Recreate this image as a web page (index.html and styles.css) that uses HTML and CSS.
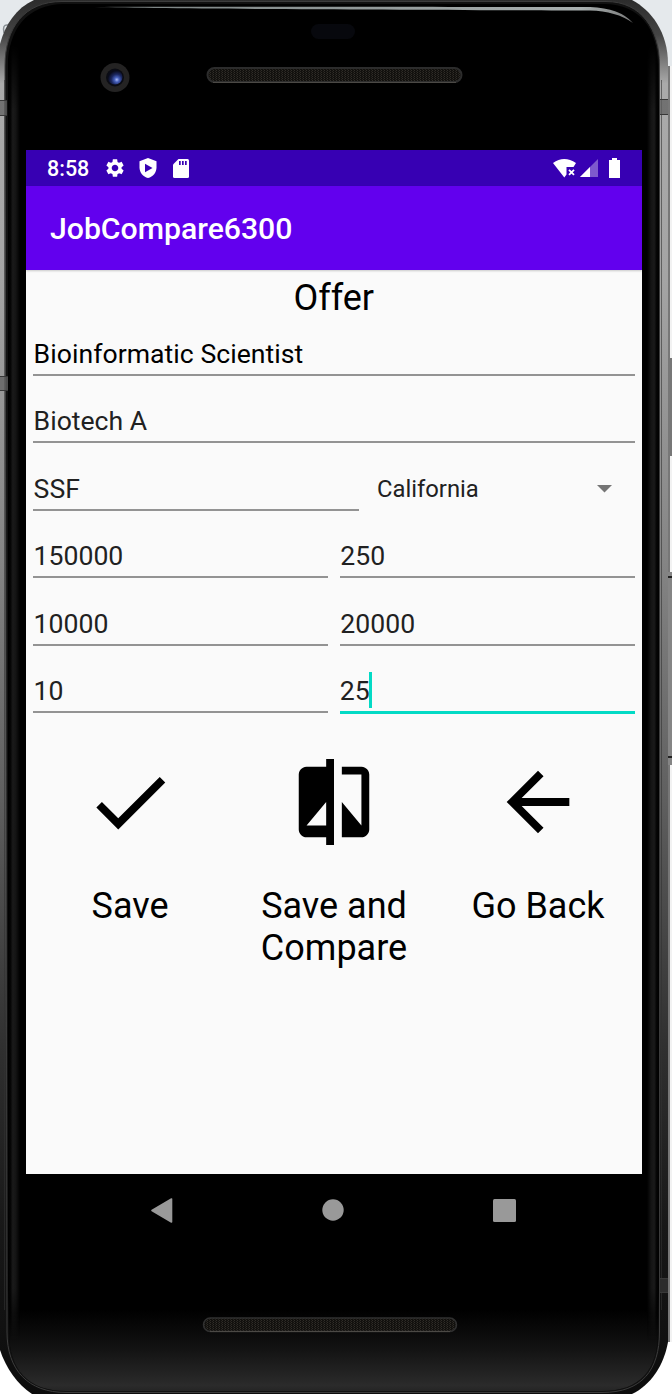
FILE: index.html
```html
<!DOCTYPE html>
<html lang="en">
<head>
<meta charset="utf-8">
<title>JobCompare6300</title>
<link rel="stylesheet" href="styles.css">
</head>
<body>
<div class="device">
  <svg class="shell" width="672" height="1394" viewBox="0 0 672 1394" aria-hidden="true">
    <defs>
      <linearGradient id="metal" x1="0" y1="0" x2="0" y2="1394" gradientUnits="userSpaceOnUse">
        <stop offset="0" stop-color="#2c2c2c"/><stop offset=".025" stop-color="#444"/>
        <stop offset=".06" stop-color="#aaa"/><stop offset=".2" stop-color="#a4a4a4"/>
        <stop offset=".4" stop-color="#858585"/><stop offset=".57" stop-color="#606060"/>
        <stop offset=".75" stop-color="#303030"/><stop offset=".88" stop-color="#181818"/>
        <stop offset="1" stop-color="#0c0c0c"/>
      </linearGradient>
      <linearGradient id="chin" x1="0" y1="1310" x2="0" y2="1394" gradientUnits="userSpaceOnUse">
        <stop offset="0" stop-color="#000"/><stop offset=".45" stop-color="#121212"/>
        <stop offset=".9" stop-color="#2b2b2b"/><stop offset="1" stop-color="#202020"/>
      </linearGradient>
      <linearGradient id="side" x1="8" x2="20" y1="0" y2="0" gradientUnits="userSpaceOnUse">
        <stop offset="0" stop-color="#000"/><stop offset=".2" stop-color="#050505"/>
        <stop offset=".4" stop-color="#1a1a1a"/><stop offset=".65" stop-color="#141414"/><stop offset="1" stop-color="#000"/>
      </linearGradient>
      <linearGradient id="fade" x1="0" x2="0" y1="45" y2="1340" gradientUnits="userSpaceOnUse">
        <stop offset="0" stop-color="#000"/><stop offset=".05" stop-color="#fff"/><stop offset=".96" stop-color="#fff"/><stop offset="1" stop-color="#000"/>
      </linearGradient>
      <mask id="sidemask" maskUnits="userSpaceOnUse" x="0" y="0" width="672" height="1394"><rect width="672" height="1394" fill="url(#fade)"/></mask>
      <linearGradient id="shine" x1="88" x2="636" y1="0" y2="0" gradientUnits="userSpaceOnUse">
        <stop offset="0" stop-color="#222"/><stop offset=".1" stop-color="#7d8585"/><stop offset=".9" stop-color="#a8afaf"/><stop offset="1" stop-color="#777"/>
      </linearGradient>
      <radialGradient id="lens" cx=".62" cy=".68" r=".6">
        <stop offset="0" stop-color="#b0bff8"/><stop offset=".25" stop-color="#4862bd"/><stop offset=".6" stop-color="#1b2760"/><stop offset="1" stop-color="#090b18"/>
      </radialGradient>
      <pattern id="mesh" width="3" height="2" patternUnits="userSpaceOnUse">
        <rect width="3" height="2" fill="#12110e"/><rect width="1" height="1" fill="#302d28"/><rect x="2" y="1" width="1" height="1" fill="#26231f"/>
      </pattern>
    </defs>
    <rect width="672" height="66" fill="#e5e9ec"/>
    <path d="M8 25q-6-1-4 8" fill="none" stroke="#8a9095" stroke-width="1.5"/>
    <rect x="667" y="66" width="3" height="1276" fill="#777"/>
    <rect x="670" y="66" width="2" height="1276" fill="#f2f2f2"/>
    <path d="M670 358h2v98h-2z" fill="#777"/><path d="M668 572h4v193h-4z" fill="#858585"/>
    <path d="M668 576h4v2h-4zm0 180h4v2h-4z" fill="#222"/>
    <path d="M0 44C5 25 16 8 34 0H632C651 10 668 32 668 64V1342C664 1365 651 1385 632 1394H32C17 1384 6 1368 0 1350Z" fill="url(#metal)"/>
    <path d="M5 66C5 28 24 1.500 62 1.500H606C642 1.500 659.500 30 659.500 65V1332C659.500 1370 642 1392.500 602 1392.500H66C28 1392.500 7 1370 7 1332Z" fill="#111" stroke="#3c3c3c"/>
    <path d="M8 66C8 30 27 4 64 4H604C641 4 658 30 658 66V1332C658 1370 640 1391 602 1391H66C28 1391 9 1370 9 1332Z" fill="#000"/>
    <path d="M9 1310H658V1332C658 1370 640 1391 602 1391H66C28 1391 9 1370 9 1332Z" fill="url(#chin)"/>
    <g mask="url(#sidemask)">
      <path d="M8 45h12v1295H8z" fill="url(#side)"/>
      <path d="M8 45h12v1295H8z" fill="url(#side)" transform="matrix(-1 0 0 1 667 0)"/>
    </g>
    <path d="M4.500 80V1310M661.500 80V1310" stroke="#333" stroke-width="1" opacity=".6"/>
    <path d="M0 101h7v14H0zM0 376h8v15H0zM660 99h8v16h-8z" fill="#606060" opacity=".75"/>
    <path d="M660 1278h8v15h-8z" fill="#2c2c2c"/>
    <path d="M0 100.500h7M0 115.500h7M0 376.500h8M0 390.500h8M660 99.500h8M660 114.500h8M660 1278.500h8M660 1292.500h8" stroke="#383838"/>
    <path d="M88 7C160 6.500 450 7 590 7Q620 8 633 23Q616 11 590 10.500C450 10 160 9 88 7Z" fill="url(#shine)"/>
    <rect x="311" y="24" width="44" height="15" rx="7.500" fill="#07080d"/>
    <circle cx="115" cy="77.500" r="14.500" fill="#242323"/><circle cx="115" cy="77.500" r="9" fill="#0b0c13"/>
    <circle cx="115" cy="77" r="7.500" fill="url(#lens)"/>
    <rect x="207.500" y="68" width="254" height="14" rx="7" fill="url(#mesh)" stroke="#2c2c2c" stroke-width="2"/>
    <rect x="203.500" y="1318" width="253" height="13.500" rx="6.700" fill="url(#mesh)" stroke="#303030" stroke-width="1.500"/>
    <path d="M213 82.500H456M210 1331.500H450" stroke="#4b4945"/>
  </svg>

  <main class="screen">
    <header class="status">
      <span class="clock">8:58</span>
      <svg class="st-gear" width="22" height="22" viewBox="0 0 24 24"><path fill="#fff" d="M19.140 12.940c.04-.3.06-.61.06-.94s-.02-.64-.07-.94l2.030-1.580c.18-.14.23-.41.12-.61l-1.920-3.320c-.12-.22-.37-.29-.59-.22l-2.390.96c-.5-.38-1.030-.7-1.620-.94l-.36-2.540c-.04-.24-.24-.41-.48-.41h-3.840c-.24 0-.43.17-.47.41l-.36 2.540c-.59.24-1.130.57-1.620.94l-2.390-.96c-.22-.08-.47 0-.59.22L2.740 8.870c-.12.21-.08.47.12.61l2.030 1.580c-.05.3-.09.63-.09.94s.02.64.07.94l-2.030 1.580c-.18.14-.23.41-.12.610l1.920 3.320c.12.220.370.290.590.220l2.390-.96c.5.380 1.030.700 1.620.940l.360 2.540c.05.240.240.410.480.410h3.840c.240 0 .440-.17.470-.410l.360-2.540c.590-.240 1.130-.560 1.620-.940l2.390.960c.220.080.470 0 .590-.220l1.920-3.320c.120-.220.070-.470-.120-.610l-2.010-1.580zM12 15.600c-1.980 0-3.600-1.620-3.600-3.600s1.620-3.600 3.600-3.600 3.600 1.620 3.600 3.600-1.620 3.600-3.600 3.600z"/></svg>
      <svg class="st-shield" width="18" height="20" viewBox="0 0 18 20"><path fill="#fff" d="M9 0L17.500 3.200V9.500C17.500 14.500 14 18.800 9 20C4 18.800.5 14.500.5 9.500V3.200Z"/><path fill="#3700b3" d="M6 5.800L13.500 10L6 14.200Z"/></svg>
      <svg class="st-card" width="16" height="19" viewBox="0 0 16 19"><path fill="#fff" d="M5.500 0H14.500Q16 0 16 1.500V17.500Q16 19 14.500 19H1.500Q0 19 0 17.500V5.500Z"/><path fill="#3700b3" d="M6 2h1.700v4H6zm3 0h1.700v4H9zm3 0h1.700v4H12z"/></svg>
      <svg class="st-wifi" width="24" height="19" viewBox="0 0 24 19"><path fill="#fff" d="M0 4Q11-4 23 4L20.500 8H13.500V15.500L11.300 18.500Z"/><path stroke="#fff" stroke-width="1.800" d="M16 10.800l5 5m0-5l-5 5"/></svg>
      <svg class="st-cell" width="18" height="18" viewBox="0 0 18 18"><path fill="#7e59cd" d="M18 0V18H0Z"/><path fill="#fff" d="M10 8V18H0Z"/></svg>
      <svg class="st-batt" width="11" height="20" viewBox="0 0 11 20"><path fill="#fff" d="M3 0h5v2h3v18H0V2h3z"/></svg>
    </header>
    <div class="appbar">JobCompare6300</div>
    <section class="form">
      <h1 class="heading">Offer</h1>
      <div class="row"><div class="field strong">Bioinformatic Scientist</div></div>
      <div class="row"><div class="field">Biotech A</div></div>
      <div class="row"><div class="field city">SSF</div>
        <div class="spinner"><span>California</span><svg width="15" height="8" viewBox="0 0 15 8"><path fill="#757575" d="M0 0h15L7.500 7.500z"/></svg></div></div>
      <div class="row"><div class="field">150000</div><div class="field">250</div></div>
      <div class="row"><div class="field">10000</div><div class="field">20000</div></div>
      <div class="row"><div class="field">10</div><div class="field focus">25<i class="caret"></i></div></div>
    </section>
    <section class="actions">
      <div class="action">
        <svg width="94" height="94" viewBox="0 0 24 24"><path d="M9 16.170L4.830 12l-1.420 1.410L9 19 21 7l-1.410-1.410z"/></svg>
        <span>Save</span>
      </div>
      <div class="action">
        <svg width="94" height="94" viewBox="0 0 24 24"><path d="M10 3H5c-1.100 0-2 .9-2 2v14c0 1.100.9 2 2 2h5v2h2V1h-2v2zm0 15H5l5-6v6zm9-15h-5v2h5v13l-5-6v9h5c1.100 0 2-.9 2-2V5c0-1.100-.9-2-2-2z"/></svg>
        <span>Save and<br>Compare</span>
      </div>
      <div class="action">
        <svg width="94" height="94" viewBox="0 0 24 24"><path d="M20 11H7.830l5.590-5.590L12 4l-8 8 8 8 1.410-1.410L7.830 13H20v-2z"/></svg>
        <span>Go Back</span>
      </div>
    </section>
  </main>

  <nav class="navbar">
    <svg width="22" height="25" viewBox="0 0 22 25"><path d="M1 12.500L20.500 1V24Z" fill="#999" stroke="#999" stroke-width="1.600" stroke-linejoin="round"/></svg>
    <svg width="22" height="22" viewBox="0 0 22 22"><circle cx="11" cy="11" r="10.700" fill="#999"/></svg>
    <svg width="23" height="23" viewBox="0 0 23 23"><rect width="23" height="23" rx="1.500" fill="#999"/></svg>
  </nav>
</div>
</body>
</html>
```
FILE: styles.css
```css
* { box-sizing: border-box; }
body { margin: 0; background: #fff; font-family: Roboto, sans-serif; }
svg { display: block; flex: none; }
.device { position: relative; width: 672px; height: 1394px; overflow: hidden; padding: 150px 30px 0 26px; }
.shell { position: absolute; left: 0; top: 0; }
.screen { position: relative; width: 616px; height: 1024px; background: #fafafa; }
.status { height: 36px; background: #3700b3; display: flex; align-items: center; padding: 0 22px 0 21px; color: #fff; }
.clock { font-size: 21.5px; font-weight: 500; width: 57px; line-height: 36px; padding-top: 2px; }
.st-shield { margin-left: 13px; }
.st-card { margin-left: 16px; }
.st-wifi { margin-left: auto; }
.st-cell { margin-left: 3px; }
.st-batt { margin-left: 11px; }
.appbar { height: 84px; background: #6200ee; color: #fff; font-size: 30.2px; font-weight: 500; line-height: 86px; padding-left: 24px; box-shadow: 0 1px 2px rgba(0,0,0,.2); }
.form { padding: 0 7.5px 0 7px; }
.heading { margin: 0; height: 54px; font-size: 36px; font-weight: 400; line-height: 57px; text-align: center; color: #000; }
.row { display: flex; gap: 12px; height: 67.4px; padding-top: 7px; }
.field { flex: 1; height: 45px; border-bottom: 2px solid #939393; font-size: 26.6px; line-height: 46px; color: #212121; text-indent: .6px; }
.strong { color: #000; letter-spacing: .04px; }
.city { flex: 0 0 326px; }
.spinner { flex: 1; display: flex; align-items: center; justify-content: space-between; height: 47px; padding: 0 23px 0 6px; font-size: 23.8px; color: #212121; }
.focus { height: 46px; border-bottom: 3px solid #03dac5; display: flex; text-indent: 0; }
.caret { width: 3px; height: 36px; margin-top: 4px; margin-left: -1px; background: #03dac5; }
.actions { display: grid; grid-template-columns: 208px 200px 208px; padding-top: 26.6px; }
.action { display: flex; flex-direction: column; align-items: center; gap: 36px; font-size: 36px; line-height: 42px; text-align: center; color: #000; }
.navbar { position: relative; height: 72px; display: flex; justify-content: space-between; align-items: center; padding: 0 126px 0 125px; }
```
